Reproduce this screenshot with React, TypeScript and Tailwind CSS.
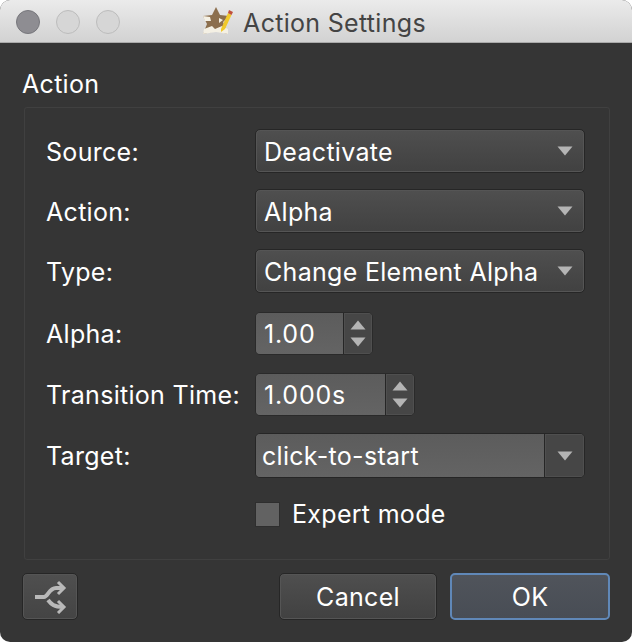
import React from 'react';

const Caret = ({ className = '' }: { className?: string }) => (
  <svg width="16" height="10" viewBox="0 0 16 10" className={className}>
    <path d="M0.5 0.5H15.5L8 9.5Z" fill="#b4b4b4" />
  </svg>
);

const Select = ({ value }: { value: string }) => (
  <div className="flex h-[44px] w-[330px] items-center justify-between rounded-[5px] border border-[#262626] bg-gradient-to-b from-[#4f4f4f] to-[#414141] pl-[8px] pr-[11px] shadow-[inset_0_0_0_1px_#555]">
    <span className="pt-[4px]">{value}</span>
    <Caret />
  </div>
);

const Spinner = ({ value, width }: { value: string; width: string }) => (
  <div className={`flex h-[43px] items-center overflow-hidden rounded-[5px] border border-[#2a2a2a] bg-[#464646] ${width}`}>
    <div className="flex h-full flex-1 items-center border-r border-[#262626] bg-gradient-to-b from-[#5c5c5c] to-[#646464] pl-[8px] pt-[2px] tracking-[0.8px]">{value}</div>
    <div className="flex h-full w-[28px] flex-col items-center justify-center gap-[7px] shadow-[inset_0_0_0_1px_#4f4f4f]">
      <Caret className="rotate-180" />
      <Caret />
    </div>
  </div>
);

const Row = ({ label, className = '', children }: { label: string; className?: string; children: React.ReactNode }) => (
  <div className={`flex items-center ${className}`}>
    <div className="w-[209px] shrink-0 pt-[3px]">{label}</div>
    {children}
  </div>
);

export default function App() {
  return (
    <div className="h-[642px] w-[632px] bg-white font-['Inter','Liberation_Sans',sans-serif] text-[25px] tracking-[0.3px] text-white">
      <div className="flex h-full flex-col overflow-hidden rounded-[10px] bg-[#353535]">
        <div className="relative flex h-[43px] shrink-0 items-center justify-center border-b border-[#aaa] bg-gradient-to-b from-[#ebebeb] to-[#d2d2d2] pr-[4px] text-[#444]">
          <div className="absolute left-[16px] top-[10px] flex gap-[16px]">
            <div className="h-[24px] w-[24px] rounded-full border border-[#77777c] bg-[#8e8d92]" />
            <div className="h-[24px] w-[24px] rounded-full border border-[#bcbcbc] bg-[#d6d6d6]" />
            <div className="h-[24px] w-[24px] rounded-full border border-[#bcbcbc] bg-[#d6d6d6]" />
          </div>
          <div className="flex items-center gap-[10px]">
            <svg width="31" height="28" viewBox="0 0 31 28">
              <path d="M14 0L18 8L27 9L21 15L26 27L14 24L1 27L5 17L1 9L10 8Z" fill="#8c6f4e" />
              <path d="M1 9L8 10L9 14L3 14Z M2 22L10 19L13 22L20 19L26 22L26 27L14 25L1 27Z M17 11L21 13L17 16Z" fill="#f4f0e4" />
              <path d="M19 22L26 6L29.500 8L23 22L19 25Z" fill="#f0c92c" />
              <path d="M26 6L27 3L31 5L29.500 8Z" fill="#c0503c" />
            </svg>
            <span className="pt-[5px]">Action Settings</span>
          </div>
        </div>

        <div className="flex flex-1 flex-col pl-[22px] pr-[22px] pt-[26px]">
          <div className="leading-[30px]">Action</div>
          <div className="ml-[2px] mt-[8px] h-[453px] w-[586px] rounded-[3px] border border-[#404040] pl-[21px] pt-[21px]">
            <Row label="Source:"><Select value="Deactivate" /></Row>
            <Row label="Action:" className="mt-[16px]"><Select value="Alpha" /></Row>
            <Row label="Type:" className="mt-[16px]"><Select value="Change Element Alpha" /></Row>
            <Row label="Alpha:" className="mt-[19px]"><Spinner value="1.00" width="w-[118px]" /></Row>
            <Row label="Transition Time:" className="mt-[18px]"><Spinner value="1.000s" width="w-[160px]" /></Row>
            <Row label="Target:" className="mt-[17px]">
              <div className="flex h-[45px] w-[330px] items-center overflow-hidden rounded-[5px] border border-[#262626] bg-[#464646]">
                <div className="flex h-full flex-1 items-center border-r border-[#262626] bg-gradient-to-b from-[#5c5c5c] to-[#646464] pl-[6px] pt-[2px]">click-to-start</div>
                <div className="flex h-full w-[39px] items-center justify-center shadow-[inset_0_0_0_1px_#4f4f4f]">
                  <Caret />
                </div>
              </div>
            </Row>
            <div className="ml-[209px] mt-[17px] flex items-center gap-[12px]">
              <div className="h-[25px] w-[25px] border border-[#2e2e2e] bg-[#626262]" />
              <span className="pt-[1px]">Expert mode</span>
            </div>
          </div>

          <div className="mt-[13px] flex items-center">
            <div className="flex h-[47px] w-[56px] items-center justify-center rounded-[5px] border border-[#262626] bg-gradient-to-b from-[#4f4f4f] to-[#444] shadow-[inset_0_0_0_1px_#555]">
              <svg width="34" height="34" viewBox="0 0 34 34" fill="none" stroke="#b9b9b9" strokeWidth="4">
                <path d="M2 17H11C15 17 16 8 23 8H30" />
                <path d="M25 2L31 8L25 14" strokeWidth="3" />
                <path d="M15 20C18 24 21 27 30 27" />
                <path d="M25 21L31 27L25 33" strokeWidth="3" />
              </svg>
            </div>
            <div className="ml-auto flex gap-[13px]">
              <div className="flex h-[47px] w-[158px] items-center justify-center rounded-[5px] border border-[#262626] bg-gradient-to-b from-[#4f4f4f] to-[#414141] pt-[2px] shadow-[inset_0_0_0_1px_#555]">Cancel</div>
              <div className="flex h-[47px] w-[160px] items-center justify-center rounded-[5px] border-2 border-[#6088b8] bg-gradient-to-b from-[#50545b] to-[#484d55] pt-[2px]">OK</div>
            </div>
          </div>
        </div>
      </div>
    </div>
  );
}
